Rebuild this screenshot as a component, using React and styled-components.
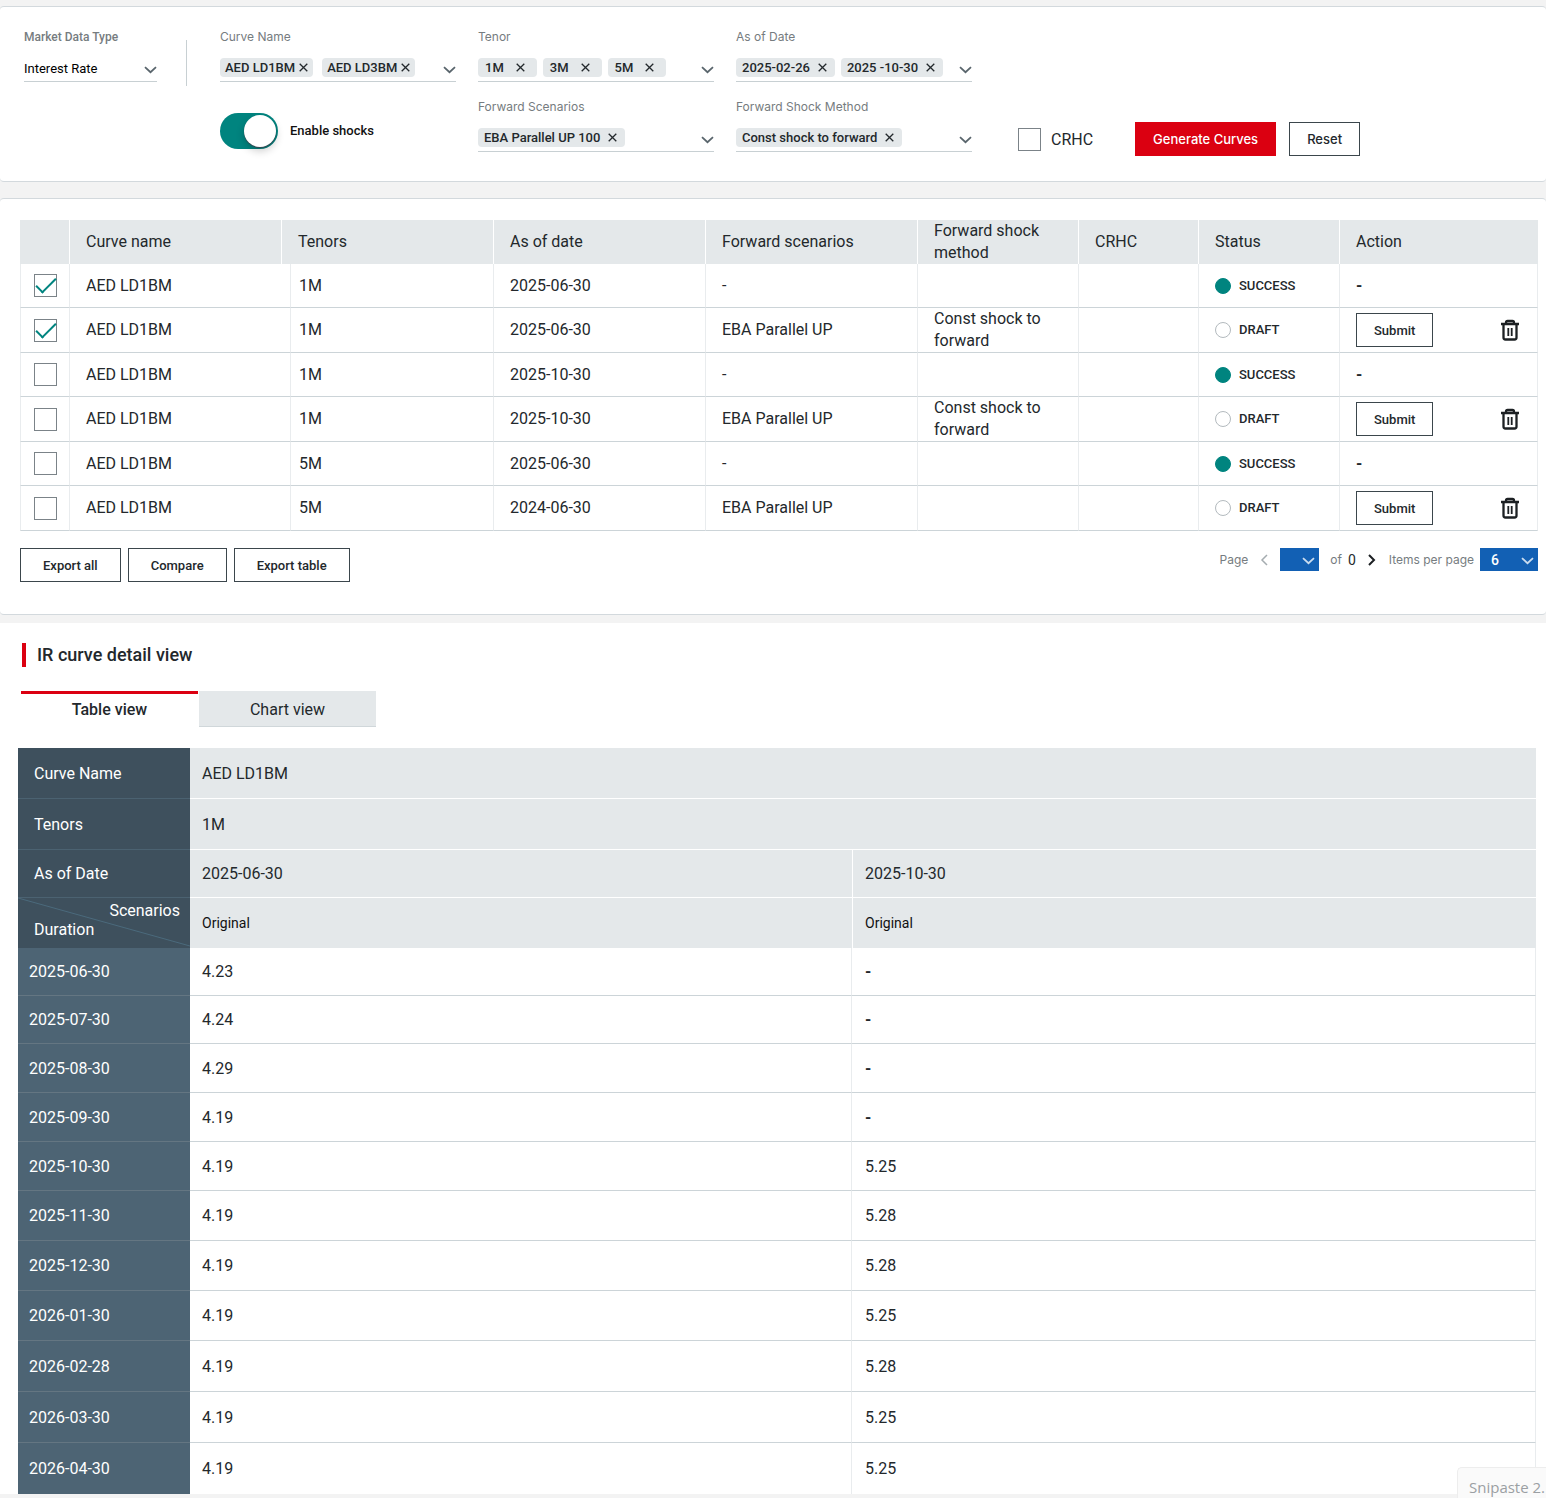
import { useState } from "react";
import styled, { createGlobalStyle } from "styled-components";

const GlobalStyle = createGlobalStyle`
  * {
    box-sizing: border-box;
  }

  body {
    margin: 0;
    background: #f3f3f3;
    color: #23282c;
    font-family: Roboto, "Liberation Sans", sans-serif;
    font-size: 16px;
  }

  button,
  select,
  input {
    font-family: inherit;
    color: inherit;
    margin: 0;
  }
`;

const Page = styled.main`
  position: relative;
  overflow: hidden;
  padding: 6px 0 4px;
`;

const Panel = styled.section`
  background: #fff;
  border-top: 1px solid #d3d9dd;
  border-bottom: 1px solid #d3d9dd;
  border-radius: 4px;
`;

const FilterPanel = styled(Panel)`
  display: flex;
  align-items: flex-start;
  padding: 22px 24px 29px;
  margin-bottom: 16px;
`;

const CurvesPanel = styled(Panel)`
  padding: 21px 8px 32px 20px;
  margin-bottom: 8px;
`;

const DetailPanel = styled.section`
  background: #fff;
  padding: 20px 10px 0 18px;
`;

const Field = styled.div`
  display: flex;
  flex-direction: column;
  width: ${(p) => p.$width || "auto"};
`;

const Label = styled.label`
  color: #767c80;
  font-family: ${(p) => (p.$plain ? "inherit" : 'Inter, "Liberation Sans", sans-serif')};
  font-size: 12px;
  font-weight: ${(p) => (p.$plain ? 500 : 400)};
  line-height: 16px;
`;

const Control = styled.div`
  display: flex;
  align-items: flex-end;
  height: 37px;
  padding-bottom: 4px;
  border-bottom: 1px solid #c8d0d3;
`;

const TypeSelect = styled.select`
  flex: 1;
  appearance: none;
  border: none;
  background: none;
  padding: 0;
  font-size: 13px;
  line-height: 16px;
  color: #000;
`;

const Chips = styled.div`
  display: flex;
  flex: 1;
  gap: ${(p) => p.$gap || "6px"};
`;

const Chip = styled.span`
  display: flex;
  align-items: center;
  height: 19px;
  padding: ${(p) => p.$pad || "0 8px 0 6px"};
  gap: ${(p) => p.$gap || "8px"};
  border-radius: 4px;
  background: #e4e8ea;
  font-size: 13px;
  font-weight: 500;
  white-space: nowrap;
`;

const IconButton = styled.button`
  display: flex;
  align-items: center;
  justify-content: center;
  padding: 0;
  border: none;
  background: none;
  cursor: pointer;
`;

const OpenButton = styled(IconButton)`
  height: 14px;
`;

const PrevButton = styled(IconButton)`
  margin: 0 12px;
`;

const Divider = styled.div`
  width: 1px;
  height: 46px;
  margin: 11px 33px 0 29px;
  background: #c8d0d3;
`;

const FilterGrid = styled.div`
  flex: 1;
  display: grid;
  grid-template-columns: repeat(3, minmax(200px, 236px)) 1fr;
  gap: 17px 22px;
`;

const SwitchLabel = styled.label`
  grid-column: 1;
  display: flex;
  align-items: center;
  gap: 12px;
  padding-top: 10px;
  font-size: 13px;
  font-weight: 500;
  color: #111;
`;

const Switch = styled.input`
  appearance: none;
  width: 58px;
  height: 36px;
  padding: 2px;
  border-radius: 18px;
  background: ${(p) => (p.checked ? "#00847f" : "#9aa3a8")};

  &::after {
    content: "";
    display: block;
    width: 32px;
    height: 32px;
    margin-left: ${(p) => (p.checked ? "22px" : "0")};
    border-radius: 50%;
    background: #fff;
    box-shadow: 0 1px 1px #36454f, 0 4px 8px rgba(0, 0, 0, 0.2);
  }
`;

const Actions = styled.div`
  display: flex;
  align-items: flex-end;
  padding: 0 0 14px 24px;
  margin-bottom: -18px;
  grid-column: 4;
  grid-row: 2;
`;

const CheckLabel = styled.label`
  display: flex;
  align-items: center;
  gap: 10px;
  height: 34px;
  margin-right: 42px;
`;

const Checkbox = styled.input`
  appearance: none;
  display: block;
  width: 23px;
  height: 23px;
  border: 1px solid #7b8388;
  background: #fff;

  &:checked::after {
    content: "";
    display: block;
    width: 18px;
    height: 8px;
    margin: 3px 0 0 1px;
    border: solid #00847f;
    border-width: 0 0 2px 2px;
    transform: rotate(-45deg);
  }
`;

const Button = styled.button`
  height: 34px;
  padding: 0 ${(p) => p.$pad || "22px"};
  border: 1px solid ${(p) => (p.$primary ? "#db0011" : "#3b464c")};
  background: ${(p) => (p.$primary ? "#db0011" : "#fff")};
  color: ${(p) => (p.$primary ? "#fff" : "#23282c")};
  font-size: 13px;
  font-weight: 500;
  white-space: nowrap;
  cursor: pointer;
`;

const WideButton = styled(Button)`
  font-family: Inter, "Liberation Sans", sans-serif;
  margin-right: 13px;
`;

const CurvesTable = styled.table`
  width: 100%;
  table-layout: fixed;
  border-collapse: separate;
  border-spacing: 0;
  line-height: 22px;

  th,
  td {
    height: 44px;
    padding: 0 17px 0 16px;
    text-align: left;
    font-weight: 400;
  }

  th {
    background: #e4e8ea;
    border-right: 1px solid #fff;
  }

  td {
    border-right: 1px solid #e9ecee;
    border-bottom: 1px solid #ccd4d8;
  }

  tbody tr:nth-child(even) td {
    height: 45px;
  }

  th:last-child {
    border-right: none;
  }

  td:first-child {
    padding: 0 0 0 13px;
    border-left: 1px solid #e9ecee;
  }

  td.tenor {
    padding-left: 8px;
  }
`;

const Status = styled.span`
  display: flex;
  align-items: center;
  gap: 8px;
  font-size: 13px;
  font-weight: 500;
`;

const Dot = styled.span`
  width: 16px;
  height: 16px;
  border-radius: 50%;
  border: 1px solid ${(p) => (p.$on ? "#00847f" : "#b3babe")};
  background: ${(p) => (p.$on ? "#00847f" : "#fff")};
`;

const RowActions = styled.div`
  display: flex;
  align-items: center;
  justify-content: space-between;
`;

const Dash = styled.span`
  font-weight: 700;
`;

const Footer = styled.div`
  display: flex;
  justify-content: space-between;
  align-items: flex-start;
  margin-top: 17px;
`;

const ButtonRow = styled.div`
  display: flex;
  gap: 7px;
`;

const Pager = styled.nav`
  display: flex;
  align-items: center;
  color: #767c80;
  font-family: Inter, "Liberation Sans", sans-serif;
  font-size: 12px;
`;

const PagerText = styled.span`
  margin: ${(p) => p.$margin || "0"};
`;

const Count = styled.span`
  margin: 0 12px 0 6px;
  color: #23282c;
  font-family: Roboto, sans-serif;
  font-size: 14px;
`;

const PagerSelect = styled.span`
  position: relative;
  display: flex;
  width: ${(p) => p.$width};
  height: 23px;
  background: #1260b4;

  select {
    width: 100%;
    appearance: none;
    border: none;
    background: none;
    padding: 0 0 0 11px;
    color: #fff;
    font-family: Roboto, sans-serif;
    font-size: 14px;
    font-weight: 500;
  }

  svg {
    position: absolute;
    right: 4px;
    top: 9px;
    pointer-events: none;
  }
`;

const Title = styled.h2`
  margin: 0 0 24px 4px;
  padding-left: 11px;
  border-left: 4px solid #db0011;
  font-size: 18px;
  font-weight: 500;
  line-height: 24px;
`;

const Tabs = styled.div`
  display: flex;
  gap: 1px;
  margin: 0 0 21px 3px;
`;

const Tab = styled.button`
  width: 177px;
  height: 36px;
  padding: 0 0 2px;
  border: none;
  border-top: 3px solid ${(p) => (p.$active ? "#db0011" : "#e4e8ea")};
  border-bottom: 1px solid ${(p) => (p.$active ? "#fff" : "#d0d7da")};
  background: ${(p) => (p.$active ? "#fff" : "#e4e8ea")};
  font-size: 16px;
  font-weight: ${(p) => (p.$active ? 500 : 400)};
  cursor: pointer;
`;

const DetailTable = styled.table`
  width: 100%;
  table-layout: fixed;
  border-collapse: separate;
  border-spacing: 0;
  text-align: left;

  th,
  td {
    padding: 0 12px;
    font-weight: 400;
  }

  thead th {
    background: #3e505d;
    color: #fff;
    padding-left: 16px;
    border-bottom: 1px solid #4b6271;
  }

  thead td {
    background: #e4e8ea;
    border-bottom: 1px solid #fff;
  }

  thead td + td {
    border-left: 1px solid #fff;
  }

  thead tr:last-child td {
    border-bottom: none;
    font-size: 14px;
    color: #111;
  }

  tbody th {
    background: #4d6474;
    color: #fff;
    padding-left: 11px;
    border-bottom: 1px solid #647682;
  }

  tbody td {
    border-bottom: 1px solid #ccd4d8;
    border-right: 1px solid #e9ecee;
  }

  tbody td + td {
    padding-left: 13px;
  }

  tbody tr:last-child > * {
    border-bottom: none;
  }
`;

const DetailRow = styled.tr`
  height: ${(p) => p.$height}px;
`;

const CornerHead = styled.th`
  && {
    padding: 0;
    border-bottom: none;
  }
`;

const Corner = styled.div`
  position: relative;
  display: grid;
  grid-template-rows: 1fr 1fr;
  height: 50px;
  padding: 3px 10px 9px 16px;
  line-height: 19px;

  svg {
    position: absolute;
    inset: 0;
    width: 100%;
    height: 100%;
  }

  span {
    position: relative;
  }

  span:nth-of-type(1) {
    text-align: right;
  }
`;

const Tooltip = styled.div`
  position: absolute;
  right: 0;
  bottom: 0;
  width: 89px;
  height: 31px;
  padding: 9px 0 0 11px;
  overflow: hidden;
  border-top: 1px solid #ededed;
  border-left: 1px solid #ededed;
  border-radius: 5px 0 0 0;
  background: #fafafa;
  color: #9b9fa3;
  font-family: "Open Sans", "Noto Sans", sans-serif;
  font-size: 15px;
  line-height: 20px;
  white-space: nowrap;
`;

const Chevron = ({ color = "#59656c" }) => (
  <svg width="13" height="8" viewBox="0 0 13 8" fill="none" stroke={color} strokeWidth="1.8">
    <path d="M1 1.200l5.500 5L12 1.200" />
  </svg>
);

const PagerArrow = ({ d, color, weight }) => (
  <svg width="8" height="12" viewBox="0 0 8 12" fill="none" stroke={color} strokeWidth={weight}>
    <path d={d} />
  </svg>
);

const Cross = () => (
  <svg width="9" height="9" viewBox="0 0 9 9" stroke="#23282c" strokeWidth="1.3">
    <path d="M.7.7l7.600 7.600M8.300.7L.7 8.300" />
  </svg>
);

const Trash = () => (
  <svg width="20" height="22" viewBox="0 0 20 22" fill="none" stroke="#1c2023" strokeWidth="2.300">
    <path d="M1 5h18M6 5V3.500Q6 2 7.500 2h5Q14 2 14 3.500V5" />
    <path d="M3.500 5v13.500Q3.500 20.500 5.500 20.500h9Q16.500 20.500 16.500 18.500V5" />
    <path d="M8.300 9v8M11.700 9v8" strokeWidth="1.800" />
  </svg>
);

const MultiSelect = ({ label, items, pad, chipGap, gap }) => {
  const [selected, setSelected] = useState(items);
  const id = label.replace(/ /g, "-").toLowerCase();

  return (
    <Field>
      <Label htmlFor={id}>{label}</Label>
      <Control>
        <Chips $gap={gap}>
          {selected.map((item) => (
            <Chip key={item} $pad={pad} $gap={chipGap}>
              {item}
              <IconButton
                aria-label={`Remove ${item}`}
                onClick={() => setSelected(selected.filter((e) => e !== item))}
              >
                <Cross />
              </IconButton>
            </Chip>
          ))}
        </Chips>
        <OpenButton id={id} aria-haspopup="listbox">
          <Chevron />
        </OpenButton>
      </Control>
    </Field>
  );
};

const curves = [
  { id: 1, tenor: "1M", date: "2025-06-30", scenario: "-", method: "" },
  { id: 2, tenor: "1M", date: "2025-06-30", scenario: "EBA Parallel UP", method: "Const shock to forward", draft: true },
  { id: 3, tenor: "1M", date: "2025-10-30", scenario: "-", method: "" },
  { id: 4, tenor: "1M", date: "2025-10-30", scenario: "EBA Parallel UP", method: "Const shock to forward", draft: true },
  { id: 5, tenor: "5M", date: "2025-06-30", scenario: "-", method: "" },
  { id: 6, tenor: "5M", date: "2024-06-30", scenario: "EBA Parallel UP", method: "", draft: true },
];

const columns = [50, 212, 9, 203, 212, 212, 161, 120, 141, 198];

const details = [
  ["2025-06-30", "4.23", "-"],
  ["2025-07-30", "4.24", "-"],
  ["2025-08-30", "4.29", "-"],
  ["2025-09-30", "4.19", "-"],
  ["2025-10-30", "4.19", "5.25"],
  ["2025-11-30", "4.19", "5.28"],
  ["2025-12-30", "4.19", "5.28"],
  ["2026-01-30", "4.19", "5.25"],
  ["2026-02-28", "4.19", "5.28"],
  ["2026-03-30", "4.19", "5.25"],
  ["2026-04-30", "4.19", "5.25"],
];

const Filters = () => {
  const [shocks, setShocks] = useState(true);

  return (
    <FilterPanel>
      <Field $width="133px">
        <Label $plain htmlFor="market-type">Market Data Type</Label>
        <Control>
          <TypeSelect id="market-type">
            <option>Interest Rate</option>
          </TypeSelect>
          <OpenButton as="span">
            <Chevron />
          </OpenButton>
        </Control>
      </Field>
      <Divider />
      <FilterGrid>
        <MultiSelect label="Curve Name" items={["AED LD1BM", "AED LD3BM"]} pad="0 5px" chipGap="4px" gap="9px" />
        <MultiSelect label="Tenor" items={["1M", "3M", "5M"]} pad="0 12px 0 7px" chipGap="12px" />
        <MultiSelect label="As of Date" items={["2025-02-26", "2025 -10-30"]} />
        <SwitchLabel>
          <Switch
            type="checkbox"
            role="switch"
            checked={shocks}
            onChange={(e) => setShocks(e.target.checked)}
          />
          Enable shocks
        </SwitchLabel>
        <MultiSelect label="Forward Scenarios" items={["EBA Parallel UP 100"]} />
        <MultiSelect label="Forward Shock Method" items={["Const shock to forward"]} />
        <Actions>
          <CheckLabel>
            <Checkbox type="checkbox" />
            CRHC
          </CheckLabel>
          <WideButton $primary $pad="17px">Generate Curves</WideButton>
          <WideButton $pad="17px">Reset</WideButton>
        </Actions>
      </FilterGrid>
    </FilterPanel>
  );
};

const Curves = () => {
  const [checked, setChecked] = useState([1, 2]);
  const toggle = (id) =>
    setChecked(checked.includes(id) ? checked.filter((e) => e !== id) : [...checked, id]);

  return (
    <CurvesPanel>
      <CurvesTable>
        <colgroup>
          {columns.map((width, i) => (
            <col key={i} style={{ width }} />
          ))}
        </colgroup>
        <thead>
          <tr>
            <th aria-label="Select" />
            <th>Curve name</th>
            <th colSpan={2}>Tenors</th>
            <th>As of date</th>
            <th>Forward scenarios</th>
            <th>Forward shock method</th>
            <th>CRHC</th>
            <th>Status</th>
            <th>Action</th>
          </tr>
        </thead>
        <tbody>
          {curves.map((row) => (
            <tr key={row.id}>
              <td>
                <Checkbox
                  type="checkbox"
                  aria-label={`Select curve ${row.id}`}
                  checked={checked.includes(row.id)}
                  onChange={() => toggle(row.id)}
                />
              </td>
              <td colSpan={2}>AED LD1BM</td>
              <td className="tenor">{row.tenor}</td>
              <td>{row.date}</td>
              <td>{row.scenario}</td>
              <td>{row.method}</td>
              <td />
              <td>
                <Status>
                  <Dot $on={!row.draft} />
                  {row.draft ? "DRAFT" : "SUCCESS"}
                </Status>
              </td>
              <td>
                {row.draft ? (
                  <RowActions>
                    <Button $pad="17px">Submit</Button>
                    <IconButton aria-label="Delete">
                      <Trash />
                    </IconButton>
                  </RowActions>
                ) : (
                  <Dash>-</Dash>
                )}
              </td>
            </tr>
          ))}
        </tbody>
      </CurvesTable>
      <Footer>
        <ButtonRow>
          <Button>Export all</Button>
          <Button>Compare</Button>
          <Button>Export table</Button>
        </ButtonRow>
        <Pager aria-label="Pagination">
          <PagerText>Page</PagerText>
          <PrevButton aria-label="Previous page">
            <PagerArrow d="M7 1L2 6l5 5" color="#a5acb0" weight="1.5" />
          </PrevButton>
          <PagerSelect $width="39px">
            <select aria-label="Page" />
            <Chevron color="#c9dcef" />
          </PagerSelect>
          <PagerText $margin="0 0 0 11px">of</PagerText>
          <Count>0</Count>
          <IconButton aria-label="Next page">
            <PagerArrow d="M1 1l5 5-5 5" color="#1c2023" weight="2" />
          </IconButton>
          <PagerText as="label" htmlFor="page-size" $margin="0 6px 0 13px">Items per page</PagerText>
          <PagerSelect $width="58px">
            <select id="page-size">
              <option>6</option>
            </select>
            <Chevron color="#c9dcef" />
          </PagerSelect>
        </Pager>
      </Footer>
    </CurvesPanel>
  );
};

const Details = () => {
  const [tab, setTab] = useState("Table view");

  return (
    <DetailPanel>
      <Title>IR curve detail view</Title>
      <Tabs role="tablist">
        {["Table view", "Chart view"].map((name) => (
          <Tab key={name} role="tab" aria-selected={tab === name} $active={tab === name} onClick={() => setTab(name)}>
            {name}
          </Tab>
        ))}
      </Tabs>
      <DetailTable>
        <colgroup>
          <col style={{ width: 172 }} />
          <col style={{ width: 662 }} />
          <col style={{ width: 684 }} />
        </colgroup>
        <thead>
          <DetailRow $height={51}>
            <th>Curve Name</th>
            <td colSpan={2}>AED LD1BM</td>
          </DetailRow>
          <DetailRow $height={51}>
            <th>Tenors</th>
            <td colSpan={2}>1M</td>
          </DetailRow>
          <DetailRow $height={48}>
            <th>As of Date</th>
            <td>2025-06-30</td>
            <td>2025-10-30</td>
          </DetailRow>
          <DetailRow $height={50}>
            <CornerHead>
              <Corner>
                <svg viewBox="0 0 172 50" preserveAspectRatio="none" stroke="#4b6a7c">
                  <path d="M0 0l172 48" />
                </svg>
                <span>Scenarios</span>
                <span>Duration</span>
              </Corner>
            </CornerHead>
            <td>Original</td>
            <td>Original</td>
          </DetailRow>
        </thead>
        <tbody>
          {details.map(([date, first, second], i) => (
            <DetailRow key={date} $height={48 + Math.floor((i + 1) / 3)}>
              <th>{date}</th>
              <td>{first}</td>
              <td>{second === "-" ? <Dash>-</Dash> : second}</td>
            </DetailRow>
          ))}
        </tbody>
      </DetailTable>
    </DetailPanel>
  );
};

const App = () => (
  <>
    <GlobalStyle />
    <Page>
      <Filters />
      <Curves />
      <Details />
      <Tooltip>Snipaste 2.</Tooltip>
    </Page>
  </>
);

export default App;
